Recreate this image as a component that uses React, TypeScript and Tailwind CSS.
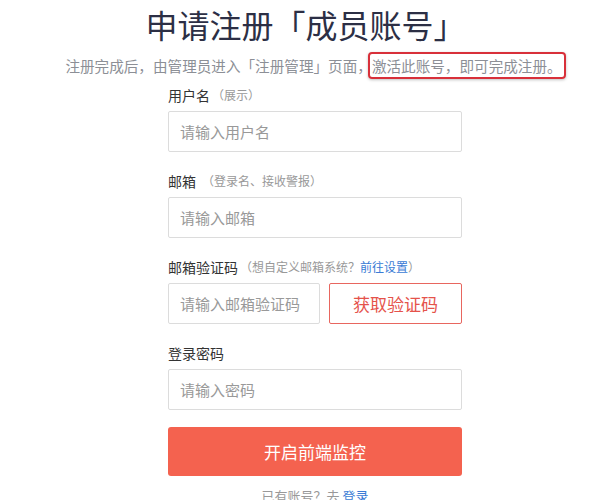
import React from "react";

const font = { fontFamily: '"Noto Sans CJK SC", "Noto Sans", sans-serif' };

function Field({ label, hint, children }: { label: string; hint?: React.ReactNode; children: React.ReactNode }) {
  return (
    <div className="flex flex-col">
      <div className="flex items-center h-5 text-[14px] leading-5 text-[#333]">
        <span>{label}</span>
        {hint && <span className="text-[12px] text-[#999] ml-0.5">{hint}</span>}
      </div>
      <div className="mt-[6px]">{children}</div>
    </div>
  );
}

function TextInput({ placeholder, className = "" }: { placeholder: string; className?: string }) {
  return (
    <input
      placeholder={placeholder}
      className={`h-[41px] border border-[#dcdcdc] rounded-[2px] px-[11px] text-[15px] text-[#333] placeholder:text-[#999] outline-none bg-white ${className}`}
    />
  );
}

export default function App() {
  return (
    <div className="w-[609px] h-[500px] overflow-hidden bg-white" style={font}>
      <h1 className="pt-[4px] text-center text-[32px] leading-[40px] text-[#2c2f45] pl-[2px]">申请注册「成员账号」</h1>
      <p className="mt-[12px] text-[14.6px] leading-5 text-[#8c8f96] flex justify-center pl-[18px]">
        <span>注册完成后，由管理员进入「注册管理」页面，</span>
        <span className="relative">
          激活此账号，即可完成注册。
          <span className="absolute -left-[4px] -right-[4px] -top-[4px] -bottom-[3px] border-2 border-[#d8303a] rounded-[4px] shadow-[0_1px_3px_rgba(0,0,0,0.25)]" />
        </span>
      </p>
      <div className="ml-[168px] w-[294px] mt-[9px] flex flex-col gap-[19px]">
        <Field label="用户名" hint="（展示）">
          <TextInput placeholder="请输入用户名" className="w-full" />
        </Field>
        <Field label="邮箱" hint={<span className="ml-1">（登录名、接收警报）</span>}>
          <TextInput placeholder="请输入邮箱" className="w-full" />
        </Field>
        <Field
          label="邮箱验证码"
          hint={
            <>
              （想自定义邮箱系统？<span className="text-[#3a7bd5]">前往设置</span>）
            </>
          }
        >
          <div className="flex gap-[9px]">
            <TextInput placeholder="请输入邮箱验证码" className="w-[152px]" />
            <div
              role="button"
              className="flex-1 h-[41px] flex items-center justify-center border border-[#e8665f] rounded-[2px] text-[17px] text-[#e5534b] bg-white cursor-pointer"
            >
              获取验证码
            </div>
          </div>
        </Field>
        <Field label="登录密码">
          <TextInput placeholder="请输入密码" className="w-full" />
        </Field>
      </div>
      <div className="ml-[168px] w-[294px] mt-[17px]">
        <button className="w-full h-[49px] rounded-[3px] bg-[#f4624f] text-white text-[17px]">开启前端监控</button>
        <p className="mt-[10px] text-center text-[13px] leading-5 text-[#999]">
          已有账号？去 <span className="text-[#3a7bd5]">登录</span>
        </p>
      </div>
    </div>
  );
}
